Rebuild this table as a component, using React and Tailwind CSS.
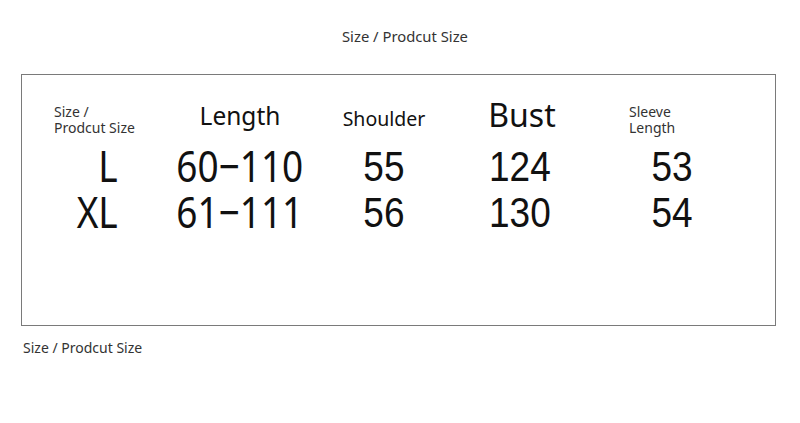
const font = { fontFamily: "'Noto Sans', 'Open Sans', sans-serif" };

const columns = [
  {
    width: "w-[138px]",
    header: (
      <div className="pl-[32px] pt-[9px] text-[14px] leading-[16px] text-[#333]">
        <div>Size /</div>
        <div>Prodcut Size</div>
      </div>
    ),
    values: ["L", "XL"],
    align: "right",
  },
  {
    width: "w-[160px]",
    header: (
      <div className="pt-[6px] text-center text-[24.5px] leading-[30px] text-[#111]">
        Length
      </div>
    ),
    values: ["60−110", "61−111"],
  },
  {
    width: "w-[128px]",
    header: (
      <div className="pt-[12px] text-center text-[19.5px] leading-[24px] text-[#111]">
        Shoulder
      </div>
    ),
    values: ["55", "56"],
    arial: true,
  },
  {
    width: "w-[144px]",
    header: (
      <div className="pt-0 pl-[4px] text-center text-[32px] leading-[40px] text-[#111]">
        Bust
      </div>
    ),
    values: ["124", "130"],
    arial: true,
  },
  {
    width: "w-[182px]",
    header: (
      <div className="pl-[37px] pt-[9px] text-[14px] leading-[16px] text-[#333]">
        <div>Sleeve</div>
        <div>Length</div>
      </div>
    ),
    values: ["53", "54"],
    arial: true,
    offset: true,
  },
];

function Column({ col }) {
  return (
    <div className={`flex flex-col ${col.width}`}>
      <div className="h-[48px]">{col.header}</div>
      {col.values.map((v) => (
        <div
          key={v}
          className={
            col.align === "right"
              ? "flex h-[46px] items-center justify-end pr-[42px]"
              : col.offset
              ? "flex h-[46px] items-center pl-[40px]"
              : "flex h-[46px] items-center justify-center"
          }
        >
          <span
            className={
              "inline-block text-[43px] leading-[40px] text-[#111] scale-x-[0.86] " +
              (col.align === "right" ? "origin-right " : "origin-center ") +
              (col.offset ? "w-[80px] text-center" : "")
            }
            style={
              col.arial
                ? { fontFamily: "'Liberation Sans', Arial, sans-serif" }
                : undefined
            }
          >
            {v}
          </span>
        </div>
      ))}
    </div>
  );
}

export default function App() {
  return (
    <div className="h-[423px] w-[800px] bg-white" style={font}>
      <div className="pl-[342px] pt-[26px] text-[14.8px] leading-[20px] text-[#333]">
        Size / Prodcut Size
      </div>
      <div className="ml-[21px] mt-[28px] h-[252px] w-[755px] border border-[#7a7a7a]">
        <div className="flex pt-[20px]">
          {columns.map((col, i) => (
            <Column key={i} col={col} />
          ))}
        </div>
      </div>
      <div className="ml-[23px] mt-[12px] text-[14px] leading-[20px] text-[#333]">
        Size / Prodcut Size
      </div>
    </div>
  );
}
